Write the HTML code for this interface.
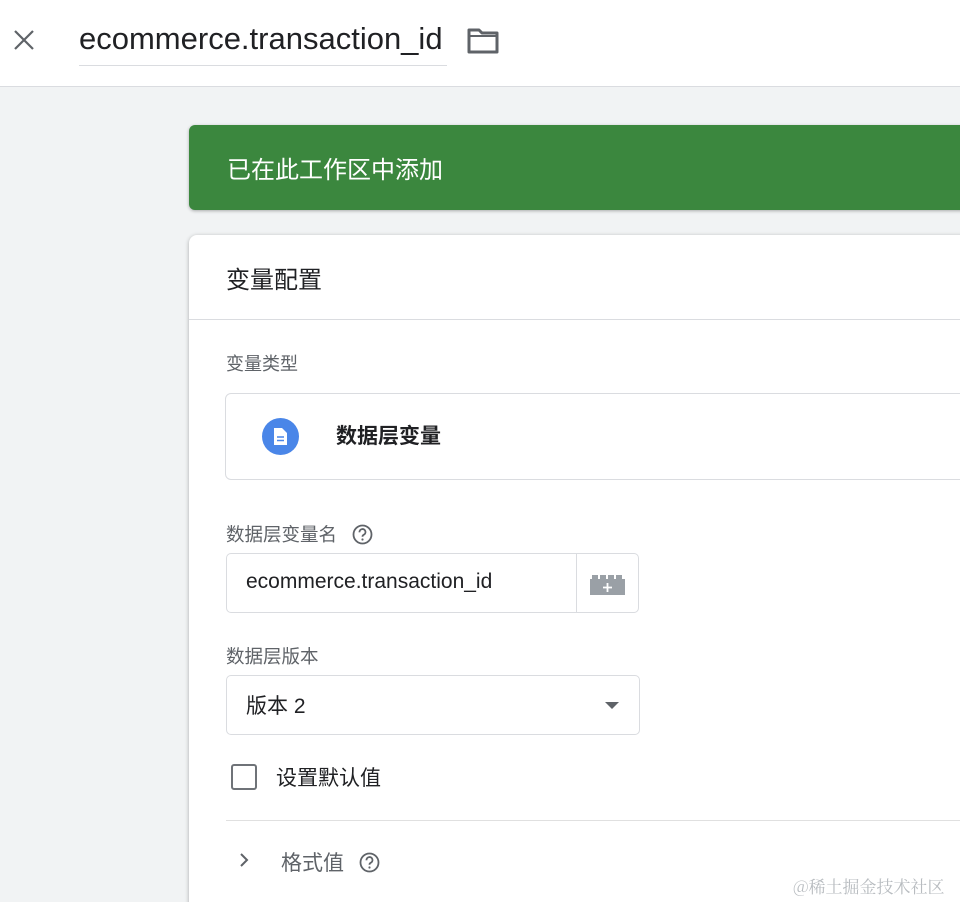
<!DOCTYPE html>
<html><head><meta charset="utf-8"><style>
*{box-sizing:border-box;margin:0;padding:0}
html,body{width:960px;height:902px;overflow:hidden}
body{background:#f1f3f4;font-family:"Liberation Sans","Noto Sans CJK SC",sans-serif;position:relative;color:#202124}
.abs{position:absolute;white-space:nowrap}
</style></head><body>
<div class="abs" style="left:0;top:0;width:960px;height:87px;background:#fff;border-bottom:1px solid #dadce0"></div>
<svg class="abs" style="left:12px;top:28px" width="24" height="24" viewBox="0 0 24 24"><path d="M3 3L21 21M21 3L3 21" stroke="#5f6368" stroke-width="2.2"/></svg>
<div class="abs" style="left:79px;top:21px;font-size:31px;color:#202124">ecommerce.transaction_id</div>
<div class="abs" style="left:79px;top:65px;width:368px;height:1px;background:#dadce0"></div>
<svg class="abs" style="left:466px;top:27px" width="34" height="28" viewBox="0 0 34 28"><path d="M3 3H13L16 6H31V25H3Z" fill="none" stroke="#5f6368" stroke-width="3" stroke-linejoin="round"/><path d="M3 9H31" stroke="#5f6368" stroke-width="2"/></svg>
<div class="abs" style="left:189px;top:125px;width:790px;height:85px;background:#3b873e;border-radius:6px;box-shadow:0 1px 3px rgba(0,0,0,.3)"></div>
<div class="abs" style="left:227px;top:150px;font-size:24px;color:#fff">已在此工作区中添加</div>
<div class="abs" style="left:189px;top:235px;width:800px;height:700px;background:#fff;border-radius:8px;box-shadow:0 1px 4px rgba(0,0,0,.3)"></div>
<div class="abs" style="left:226px;top:260px;font-size:24px">变量配置</div>
<div class="abs" style="left:189px;top:319px;width:771px;height:1px;background:#dadce0"></div>
<div class="abs" style="left:226px;top:350px;font-size:18px;color:#5f6368">变量类型</div>
<div class="abs" style="left:225px;top:393px;width:760px;height:87px;border:1px solid #dadce0;border-radius:6px"></div>
<div class="abs" style="left:262px;top:418px;width:37px;height:37px;border-radius:50%;background:#4a86e8"></div>
<svg class="abs" style="left:273px;top:427px" width="15" height="19" viewBox="0 0 15 19"><path d="M1 1H9L14 6V18H1Z" fill="#fff"/><path d="M4 10H11M4 13.5H11" stroke="#4a86e8" stroke-width="1.5"/></svg>
<div class="abs" style="left:336px;top:420px;font-size:21px;font-weight:bold">数据层变量</div>
<div class="abs" style="left:226px;top:521px;font-size:18.5px;color:#5f6368">数据层变量名</div>
<svg class="abs" style="left:352px;top:524px" width="21" height="21" viewBox="0 0 21 21"><circle cx="10.5" cy="10.5" r="9" fill="none" stroke="#5f6368" stroke-width="1.8"/><path d="M7.5 8.3a3 3 0 1 1 4 2.6c-.8.4-1 .9-1 1.8" fill="none" stroke="#5f6368" stroke-width="1.8"/><circle cx="10.5" cy="15.5" r="1.1" fill="#5f6368"/></svg>
<div class="abs" style="left:226px;top:553px;width:413px;height:60px;border:1px solid #dadce0;border-radius:5px"></div>
<div class="abs" style="left:576px;top:554px;width:1px;height:58px;background:#dadce0"></div>
<div class="abs" style="left:246px;top:570px;font-size:21px">ecommerce.transaction_id</div>
<svg class="abs" style="left:590px;top:574px" width="35" height="22" viewBox="0 0 35 22"><path d="M0 5H2V1H8V5H10V1H16V5H18V1H24V5H26V1H32V5H35V21H0Z" fill="#9aa0a6"/><path d="M17.5 9V18M13 13.5H22" stroke="#fff" stroke-width="1.8"/></svg>
<div class="abs" style="left:226px;top:643px;font-size:18.5px;color:#5f6368">数据层版本</div>
<div class="abs" style="left:226px;top:675px;width:414px;height:60px;border:1px solid #dadce0;border-radius:5px"></div>
<div class="abs" style="left:246px;top:690px;font-size:21px">版本 2</div>
<svg class="abs" style="left:604px;top:701px" width="16" height="9" viewBox="0 0 16 9"><path d="M1 1H15L8 8Z" fill="#5f6368"/></svg>
<div class="abs" style="left:231px;top:764px;width:26px;height:26px;border:2.5px solid #6f7378;border-radius:3px"></div>
<div class="abs" style="left:276px;top:762px;font-size:21px">设置默认值</div>
<div class="abs" style="left:226px;top:820px;width:734px;height:1px;background:#e0e0e0"></div>
<svg class="abs" style="left:238px;top:851px" width="12" height="18" viewBox="0 0 12 18"><path d="M3 3L9 9L3 15" fill="none" stroke="#5f6368" stroke-width="2"/></svg>
<div class="abs" style="left:281px;top:847px;font-size:21px;color:#5f6368">格式值</div>
<svg class="abs" style="left:359px;top:852px" width="21" height="21" viewBox="0 0 21 21"><circle cx="10.5" cy="10.5" r="9" fill="none" stroke="#5f6368" stroke-width="1.8"/><path d="M7.5 8.3a3 3 0 1 1 4 2.6c-.8.4-1 .9-1 1.8" fill="none" stroke="#5f6368" stroke-width="1.8"/><circle cx="10.5" cy="15.5" r="1.1" fill="#5f6368"/></svg>
<div class="abs" style="left:793px;top:873px;font-size:17px;color:#b8bcc0;font-family:'Noto Serif CJK SC',serif">@稀土掘金技术社区</div>
</body></html>
